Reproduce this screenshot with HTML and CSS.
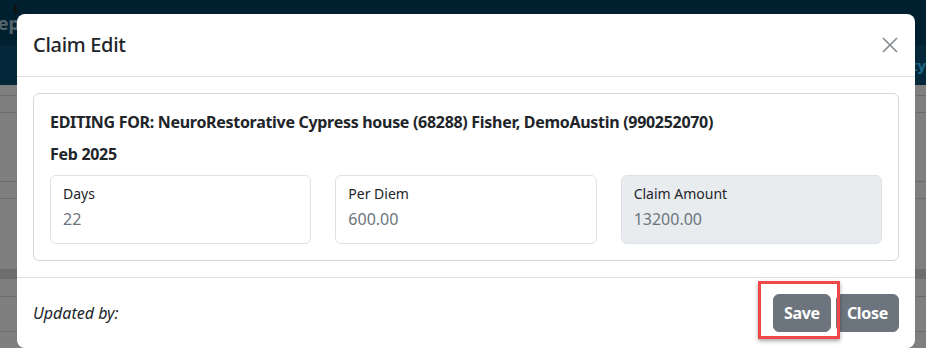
FILE: index.html
```html
<!DOCTYPE html>
<html lang="en">
<head>
<meta charset="UTF-8">
<meta name="viewport" content="width=device-width, initial-scale=1.0">
<title>Claim Edit</title>
<link rel="stylesheet" href="styles.css">
</head>
<body>
    <div class="topbar">
        <div class="topbar-row">
            <span class="brand">Reports</span>
        </div>
        <div class="topbar-row sub">
            <span class="sub-link">Facility</span>
        </div>
    </div>
    <div class="page">
        <div class="row r1"></div>
        <div class="row r2"></div>
        <div class="row r3"></div>
        <div class="row r4"></div>
        <div class="row r5"><span class="mark"></span></div>
        <div class="row r6"></div>
        <div class="row r7"></div>
    </div>

    <div class="modal">
        <div class="modal-header">
            <h5 class="modal-title">Claim Edit</h5>
            <button class="btn-close" type="button" aria-label="Close">
                <svg width="16" height="16" viewBox="0 0 16 16"><path d="M1 1 L15 15 M15 1 L1 15" stroke="#6c757d" stroke-width="1.6" fill="none"/></svg>
            </button>
        </div>
        <div class="modal-body">
            <div class="card">
                <div class="editing">EDITING FOR: NeuroRestorative Cypress house (68288) Fisher, DemoAustin (990252070)</div>
                <div class="period">Feb 2025</div>
                <div class="fields">
                    <div class="field">
                        <label>Days</label>
                        <div class="value">22</div>
                    </div>
                    <div class="field">
                        <label>Per Diem</label>
                        <div class="value">600.00</div>
                    </div>
                    <div class="field disabled">
                        <label>Claim Amount</label>
                        <div class="value">13200.00</div>
                    </div>
                </div>
            </div>
        </div>
        <div class="modal-footer">
            <em class="updated">Updated by:</em>
            <button class="btn" type="button">Save</button>
            <button class="btn" type="button">Close</button>
        </div>
    </div>
    <div class="highlight"></div>
</body>
</html>
```

FILE: styles.css
```css
body {
    margin: 0;
    width: 926px;
    height: 348px;
    overflow: hidden;
    position: relative;
    background-color: #7f7f7f;
    font-family: "Noto Sans", "Open Sans", sans-serif;
    color: #212529;
}
.topbar {
    height: 85px;
    background-color: #00202f;
}
.topbar-row {
    height: 45px;
    display: flex;
    align-items: center;
}
.topbar-row.sub {
    height: 40px;
    background-color: #04283a;
    justify-content: flex-end;
}
.brand {
    margin-left: -14px;
    color: #56646e;
    font-size: 18px;
    font-weight: bold;
}
.sub-link {
    color: #1d6688;
    font-size: 15px;
    font-weight: bold;
}
.page {
    display: flex;
    flex-direction: column;
}
.row {
    border-bottom: 1px solid #6b6b6b;
}
.r1 { height: 10px; }
.r2 { height: 16px; }
.r3 { height: 68px; }
.r4 { height: 16px; }
.r5 { height: 70px; border-bottom: 10px solid #6e6e6e; }
.r6 { height: 17px; position: relative; }
.r7 { height: 34px; }
.mark {
    position: absolute;
    left: 14px;
    top: 5px;
    width: 3px;
    height: 9px;
    background-color: #111;
}

/* modal */
.modal {
    position: absolute;
    left: 17px;
    top: 14px;
    width: 898px;
    background-color: #fff;
    border-radius: 8px;
    box-sizing: border-box;
}
.modal-header {
    display: flex;
    align-items: center;
    justify-content: space-between;
    padding: 16px;
    border-bottom: 1px solid #dee2e6;
}
.modal-title {
    margin: 0;
    font-size: 20px;
    font-weight: 500;
    line-height: 30px;
    letter-spacing: -0.3px;
}
.btn-close {
    border: none;
    background: none;
    padding: 0;
    margin-right: 1px;
    width: 16px;
    height: 16px;
    cursor: pointer;
    opacity: 0.85;
}
.modal-body {
    padding: 16px;
}
.card {
    border: 1px solid #d6d8db;
    border-radius: 6px;
    padding: 16px;
}
.editing, .period {
    font-weight: bold;
    font-size: 16px;
    line-height: 24px;
    margin-bottom: 8px;
    letter-spacing: -0.3px;
}
.period {
    margin-bottom: 9px;
}
.fields {
    display: grid;
    grid-template-columns: repeat(3, 1fr);
    gap: 24px;
}
.field {
    height: 69px;
    box-sizing: border-box;
    border: 1px solid #dee2e6;
    border-radius: 6px;
    padding: 7px 12px;
}
.field.disabled {
    background-color: #e9ecef;
}
.field label {
    display: block;
    font-size: 14px;
    line-height: 21px;
}
.field .value {
    margin-top: 3px;
    font-size: 16px;
    line-height: 24px;
    color: #6c757d;
}
.modal-footer {
    display: flex;
    align-items: center;
    gap: 5px;
    padding: 12px;
    padding-left: 16px;
    border-top: 1px solid #dee2e6;
}
.updated {
    margin-right: auto;
    font-size: 16px;
}
.btn {
    margin: 4px 0;
    padding: 6px 10px;
    height: 38px;
    background-color: #6c757d;
    border: 1px solid #6c757d;
    border-radius: 6px;
    color: #fff;
    font-family: inherit;
    font-size: 16px;
    font-weight: bold;
    letter-spacing: -0.3px;
    cursor: pointer;
}
.btn:last-child {
    margin-right: 4px;
}
.highlight {
    position: absolute;
    left: 758px;
    top: 281px;
    width: 76px;
    height: 52px;
    border: 3px solid #f04848;
    box-shadow: 0 2px 4px rgba(0, 0, 0, 0.35);
}
```
